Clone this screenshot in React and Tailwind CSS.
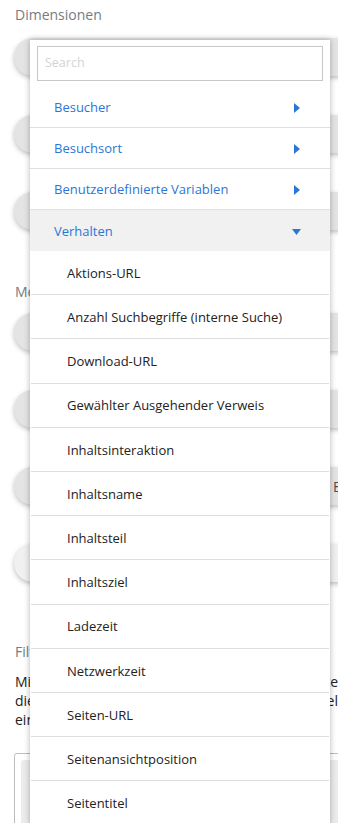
import React from 'react';

const groups = ['Besucher', 'Besuchsort', 'Benutzerdefinierte Variablen'];

const subItems = [
  'Aktions-URL',
  'Anzahl Suchbegriffe (interne Suche)',
  'Download-URL',
  'Gewählter Ausgehender Verweis',
  'Inhaltsinteraktion',
  'Inhaltsname',
  'Inhaltsteil',
  'Inhaltsziel',
  'Ladezeit',
  'Netzwerkzeit',
  'Seiten-URL',
  'Seitenansichtposition',
  'Seitentitel',
];

// paragraph lines under "Filter": left part sits behind the menu, right part peeks out
const filterLines = [
  ['Mit Segmenten können Sie die Berichtsdaten auf bestimmte', 'Segmente'],
  ['die Sie auswählen, einschränken. Wählen Sie dazu ein Beis', 'piel'],
  ['ein', ''],
];

const Pill = ({ light, label }) => (
  <div
    className={`h-[38px] ml-[14px] mr-[-40px] rounded-full flex items-center shadow-[0_2px_5px_rgba(0,0,0,0.25)] ${
      light ? 'bg-[#f0f0f0]' : 'bg-[#e4e4e4]'
    }`}
  >
    {label && (
      <span className="pl-[319px] whitespace-nowrap text-[14px] text-[#4a4f57]">{label}</span>
    )}
  </div>
);

const ArrowRight = () => (
  <svg width="6" height="10" viewBox="0 0 6 10" className="fill-[#2a76d8]">
    <path d="M0 0 L6 5 L0 10 Z" />
  </svg>
);

const ArrowDown = () => (
  <svg width="9" height="6" viewBox="0 0 9 6" className="fill-[#2a76d8]">
    <path d="M0 0 L9 0 L4.5 6 Z" />
  </svg>
);

const Dropdown = () => (
  <div className="absolute left-[30px] top-[40px] w-[300px] bg-white shadow-[0_0_6px_rgba(0,0,0,0.3)]">
    <div className="px-[7px] pt-[6px] pb-[6px]">
      <div className="h-[35px] border border-[#c8c8c8] flex items-center px-[7px] text-[12.5px] text-[#d4d4d4]">
        Search
      </div>
    </div>
    <ul>
      {groups.map((g) => (
        <li
          key={g}
          className="h-[41px] border-b border-[#e0e0e0] flex items-center justify-between pl-[24px] pr-[30px] pt-[2px] text-[13px] text-[#2a76d8]"
        >
          <span>{g}</span>
          <ArrowRight />
        </li>
      ))}
      <li className="h-[41px] bg-[#f1f1f1] flex items-center justify-between pl-[24px] pr-[29px] pt-[2px] text-[13px] text-[#2a76d8]">
        <span>Verhalten</span>
        <ArrowDown />
      </li>
    </ul>
    <ul className="mx-px">
      {subItems.map((s) => (
        <li
          key={s}
          className="h-[44.2px] border-b border-[#dedede] flex items-center pl-[36px] pt-[2px] text-[13px] text-[#222]"
        >
          {s}
        </li>
      ))}
    </ul>
  </div>
);

export default function App() {
  return (
    <div
      className="relative w-[338px] h-[823px] overflow-hidden bg-white"
      style={{ fontFamily: '"Open Sans", "Noto Sans", sans-serif' }}
    >
      <div className="pt-[4px]">
        <h3 className="pl-[15px] text-[14px] text-[#767b83] leading-[22px]">Dimensionen</h3>
        <div className="mt-[12px] flex flex-col gap-[39px]">
          <Pill />
          <Pill />
          <Pill />
        </div>
        <h3 className="mt-[51px] pl-[15px] text-[14px] text-[#767b83] leading-[22px]">Metriken</h3>
        <div className="mt-[10px] flex flex-col gap-[39px]">
          <Pill />
          <Pill />
          <Pill label="Eindeutige Besucher" />
          <Pill light />
        </div>
        <h3 className="mt-[59px] pl-[15px] text-[14px] text-[#767b83] leading-[22px]">Filter</h3>
        <div className="mt-[9px] pl-[15px] text-[14px] leading-[19px] text-[#222]">
          {filterLines.map(([left, right], i) => (
            <div key={i} className="flex whitespace-nowrap">
              <span className="w-[318px] overflow-hidden">{left}</span>
              <span>{right}</span>
            </div>
          ))}
        </div>
        <div className="mt-[24px] ml-[14px] mr-[-10px] h-[80px] border border-[#bdbdbd] rounded-[3px] p-[6px]">
          <div className="h-full bg-[#ececec] rounded-[3px]" />
        </div>
      </div>
      <Dropdown />
    </div>
  );
}
